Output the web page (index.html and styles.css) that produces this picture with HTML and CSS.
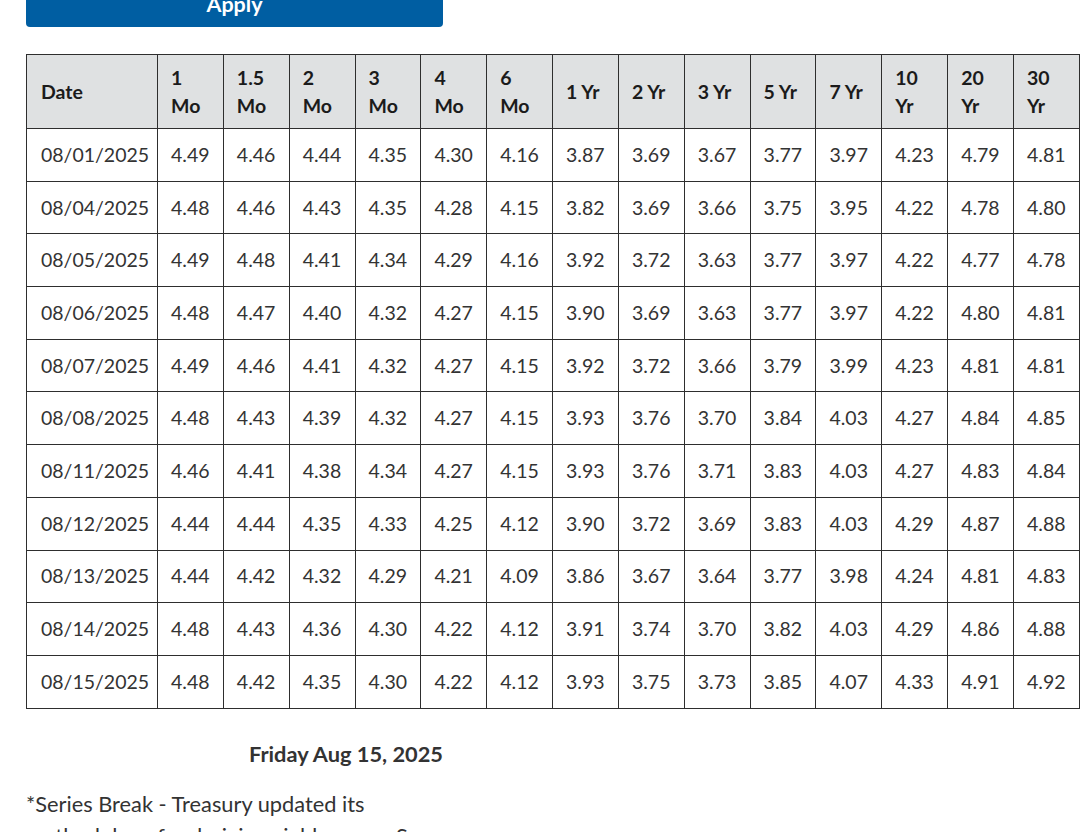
FILE: index.html
```html
<!DOCTYPE html>
<html lang="en">
<head>
<meta charset="utf-8">
<title>Daily Treasury Par Yield Curve Rates</title>
<link rel="stylesheet" href="styles.css">
</head>
<body>
<div class="page">
  <div class="narrow">
    <button class="apply" type="button">Apply</button>
  </div>
  <table class="rates">
    <colgroup>
      <col class="c-date">
      <col span="14">
    </colgroup>
    <thead>
      <tr>
        <th>Date</th><th>1 Mo</th><th>1.5 Mo</th><th>2 Mo</th><th>3 Mo</th><th>4 Mo</th><th>6 Mo</th><th>1 Yr</th><th>2 Yr</th><th>3 Yr</th><th>5 Yr</th><th>7 Yr</th><th>10 Yr</th><th>20 Yr</th><th>30 Yr</th>
      </tr>
    </thead>
    <tbody>
      <tr><td>08/01/2025</td><td>4.49</td><td>4.46</td><td>4.44</td><td>4.35</td><td>4.30</td><td>4.16</td><td>3.87</td><td>3.69</td><td>3.67</td><td>3.77</td><td>3.97</td><td>4.23</td><td>4.79</td><td>4.81</td></tr>
      <tr><td>08/04/2025</td><td>4.48</td><td>4.46</td><td>4.43</td><td>4.35</td><td>4.28</td><td>4.15</td><td>3.82</td><td>3.69</td><td>3.66</td><td>3.75</td><td>3.95</td><td>4.22</td><td>4.78</td><td>4.80</td></tr>
      <tr><td>08/05/2025</td><td>4.49</td><td>4.48</td><td>4.41</td><td>4.34</td><td>4.29</td><td>4.16</td><td>3.92</td><td>3.72</td><td>3.63</td><td>3.77</td><td>3.97</td><td>4.22</td><td>4.77</td><td>4.78</td></tr>
      <tr><td>08/06/2025</td><td>4.48</td><td>4.47</td><td>4.40</td><td>4.32</td><td>4.27</td><td>4.15</td><td>3.90</td><td>3.69</td><td>3.63</td><td>3.77</td><td>3.97</td><td>4.22</td><td>4.80</td><td>4.81</td></tr>
      <tr><td>08/07/2025</td><td>4.49</td><td>4.46</td><td>4.41</td><td>4.32</td><td>4.27</td><td>4.15</td><td>3.92</td><td>3.72</td><td>3.66</td><td>3.79</td><td>3.99</td><td>4.23</td><td>4.81</td><td>4.81</td></tr>
      <tr><td>08/08/2025</td><td>4.48</td><td>4.43</td><td>4.39</td><td>4.32</td><td>4.27</td><td>4.15</td><td>3.93</td><td>3.76</td><td>3.70</td><td>3.84</td><td>4.03</td><td>4.27</td><td>4.84</td><td>4.85</td></tr>
      <tr><td>08/11/2025</td><td>4.46</td><td>4.41</td><td>4.38</td><td>4.34</td><td>4.27</td><td>4.15</td><td>3.93</td><td>3.76</td><td>3.71</td><td>3.83</td><td>4.03</td><td>4.27</td><td>4.83</td><td>4.84</td></tr>
      <tr><td>08/12/2025</td><td>4.44</td><td>4.44</td><td>4.35</td><td>4.33</td><td>4.25</td><td>4.12</td><td>3.90</td><td>3.72</td><td>3.69</td><td>3.83</td><td>4.03</td><td>4.29</td><td>4.87</td><td>4.88</td></tr>
      <tr><td>08/13/2025</td><td>4.44</td><td>4.42</td><td>4.32</td><td>4.29</td><td>4.21</td><td>4.09</td><td>3.86</td><td>3.67</td><td>3.64</td><td>3.77</td><td>3.98</td><td>4.24</td><td>4.81</td><td>4.83</td></tr>
      <tr><td>08/14/2025</td><td>4.48</td><td>4.43</td><td>4.36</td><td>4.30</td><td>4.22</td><td>4.12</td><td>3.91</td><td>3.74</td><td>3.70</td><td>3.82</td><td>4.03</td><td>4.29</td><td>4.86</td><td>4.88</td></tr>
      <tr><td>08/15/2025</td><td>4.48</td><td>4.42</td><td>4.35</td><td>4.30</td><td>4.22</td><td>4.12</td><td>3.93</td><td>3.75</td><td>3.73</td><td>3.85</td><td>4.07</td><td>4.33</td><td>4.91</td><td>4.92</td></tr>
    </tbody>
  </table>
  <div class="narrow">
    <p class="as-of">Friday Aug 15, 2025</p>
    <p class="note">*Series Break - Treasury updated its methodology for deriving yield curves. See details here.</p>
  </div>
</div>
</body>
</html>
```

FILE: styles.css
```css
html, body {
  margin: 0;
  padding: 0;
  background: #ffffff;
}

body {
  font-family: Lato, "Noto Sans", "Liberation Sans", sans-serif;
  color: #1b1b1b;
  overflow: hidden;
}

.page {
  padding-left: 26px;
  margin-top: -17px;
}

.narrow {
  width: 417px;
}

.apply {
  display: block;
  width: 100%;
  height: 44px;
  border: 0;
  border-radius: 4px;
  background: #005ea2;
  color: #ffffff;
  font-family: inherit;
  font-weight: 700;
  font-size: 21.5px;
  line-height: 28px;
  padding: 0 0 3px;
}

.rates {
  margin-top: 27px;
  width: 1054px;
  table-layout: fixed;
  border-collapse: collapse;
  font-size: 19.5px;
  line-height: 28px;
}

.c-date {
  width: 131px;
}

.rates th,
.rates td {
  border: 1px solid #2e2e2e;
  text-align: left;
  vertical-align: middle;
}

.rates th {
  background: #dfe1e2;
  font-weight: 700;
  color: #1b1b1b;
  padding: 8.5px 13px 8.5px 13px;
}

.rates th:first-child,
.rates td:first-child {
  padding-left: 14px;
}

.rates td {
  color: #333333;
  padding: 11.85px 10px 11.85px 13px;
  white-space: nowrap;
}

.as-of {
  margin: 31px 0 0;
  text-align: right;
  font-weight: 700;
  font-size: 21.8px;
  line-height: 28px;
  color: #333333;
}

.note {
  margin: 20px 0 0;
  font-size: 21.8px;
  line-height: 32px;
  color: #333333;
}
```
